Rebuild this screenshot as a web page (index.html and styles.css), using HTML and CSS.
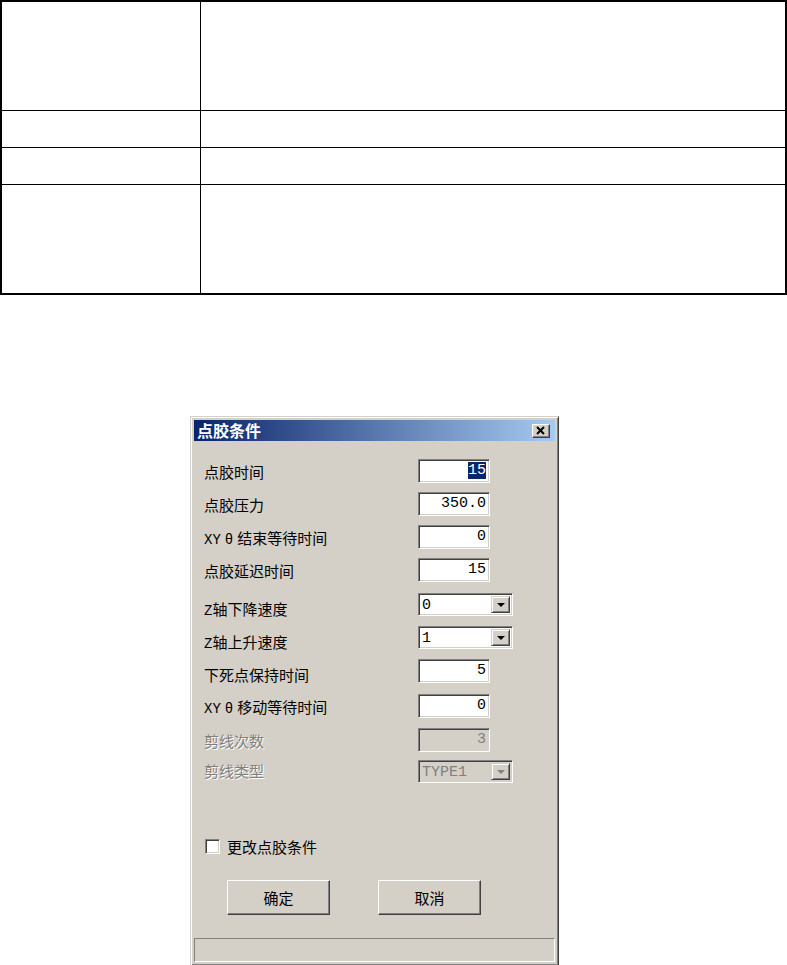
FILE: index.html
```html
<!DOCTYPE html>
<html lang="zh-CN">

<head>
    <meta charset="utf-8">
    <meta name="viewport" content="width=device-width, initial-scale=1.0">
    <title>点胶条件</title>
    <link rel="stylesheet" href="styles.css">
</head>

<body>
    <div class="doc_table">
        <div class="cell"></div>
        <div class="cell"></div>
        <div class="cell"></div>
        <div class="cell"></div>
        <div class="cell"></div>
        <div class="cell"></div>
        <div class="cell"></div>
        <div class="cell"></div>
    </div>

    <div class="dialog">
        <div class="titlebar">
            <span class="title">点胶条件</span>
            <button class="close_btn">
                <svg width="10" height="9" viewBox="0 0 10 9">
                    <path d="M1 1 L8 8 M8 1 L1 8" stroke="#000" stroke-width="2" fill="none"/>
                </svg>
            </button>
        </div>

        <div class="dialog_body">
            <div class="form">
                <div class="row">
                    <span class="label">点胶时间</span>
                    <div class="edit"><span class="valgt">15</span></div>
                </div>
                <div class="row">
                    <span class="label">点胶压力</span>
                    <div class="edit">350.0</div>
                </div>
                <div class="row">
                    <span class="label"><span class="latin">XY<span class="theta">θ</span></span>结束等待时间</span>
                    <div class="edit">0</div>
                </div>
                <div class="row tall">
                    <span class="label">点胶延迟时间</span>
                    <div class="edit">15</div>
                </div>
                <div class="row">
                    <span class="label low"><span class="latin">Z</span>轴下降速度</span>
                    <div class="combo">
                        <span class="combo_val">0</span>
                        <span class="combo_btn"><span class="arrow"></span></span>
                    </div>
                </div>
                <div class="row">
                    <span class="label low"><span class="latin">Z</span>轴上升速度</span>
                    <div class="combo">
                        <span class="combo_val">1</span>
                        <span class="combo_btn"><span class="arrow"></span></span>
                    </div>
                </div>
                <div class="row tall">
                    <span class="label low">下死点保持时间</span>
                    <div class="edit">5</div>
                </div>
                <div class="row mid">
                    <span class="label"><span class="latin">XY<span class="theta">θ</span></span>移动等待时间</span>
                    <div class="edit">0</div>
                </div>
                <div class="row short">
                    <span class="label disabled">剪线次数</span>
                    <div class="edit disabled">3</div>
                </div>
                <div class="row last">
                    <span class="label disabled high">剪线类型</span>
                    <div class="combo disabled">
                        <span class="combo_val">TYPE1</span>
                        <span class="combo_btn"><span class="arrow"></span></span>
                    </div>
                </div>
            </div>

            <div class="check_row">
                <span class="checkbox"></span>
                <span>更改点胶条件</span>
            </div>

            <div class="buttons">
                <button class="btn">确定</button>
                <button class="btn">取消</button>
            </div>

            <div class="statusbar"></div>
        </div>
    </div>
</body>

</html>
```

FILE: styles.css
```css
body {
    margin: 0;
    background-color: #fff;
    font-family: "Noto Sans CJK SC", sans-serif;
}

/* table at the top of the page */
.doc_table {
    display: grid;
    grid-template-columns: 198px 1fr;
    grid-template-rows: 108px 36px 36px 108px;
    gap: 1px;
    width: 787px;
    box-sizing: border-box;
    border: 2px solid #000;
    background-color: #000;
}

.cell {
    background-color: #fff;
}

/* the dialog */
.dialog {
    width: 369px;
    margin: 121px 0 0 190px;
    box-sizing: border-box;
    background-color: #d4d0c8;
    border: 1px solid;
    border-color: #d4d0c8 #404040 #404040 #d4d0c8;
    box-shadow: inset 1px 1px #fff, inset -1px -1px #808080;
    padding: 3px;
}

.titlebar {
    display: flex;
    align-items: center;
    justify-content: space-between;
    height: 21px;
    padding: 0 5px 0 3px;
    background: linear-gradient(to right, #0a246a, #a6caf0);
}

.title {
    color: #fff;
    font-size: 16px;
    font-weight: bold;
    line-height: 21px;
}

.close_btn {
    display: flex;
    align-items: center;
    justify-content: center;
    width: 18px;
    height: 14px;
    padding: 0;
    background-color: #d4d0c8;
    border: 1px solid;
    border-color: #fff #404040 #404040 #fff;
    box-shadow: inset -1px -1px #808080;
}

.form {
    padding: 18px 0 0 10px;
}

.row {
    display: flex;
    height: 33px;
}

.row.tall {
    height: 35px;
}

.row.mid {
    height: 34px;
}

.row.short {
    height: 32px;
}

.row.last {
    height: 23px;
}

.label {
    width: 214px;
    font-size: 15px;
    line-height: 20px;
    padding-top: 3px;
    color: #000;
}

.label.low {
    padding-top: 6px;
}

.label.high {
    padding-top: 1px;
}

.label.disabled {
    color: #808080;
    text-shadow: 1px 1px 0 #fff;
}

.latin {
    font-family: "Liberation Mono", monospace;
    font-size: 14px;
}

.theta {
    margin: 0 4px;
}

.edit {
    width: 72px;
    height: 24px;
    box-sizing: border-box;
    border: 1px solid;
    border-color: #808080 #fff #fff #808080;
    box-shadow: inset 1px 1px #404040, inset -1px -1px #d4d0c8;
    background-color: #fff;
    padding: 1px 3px 0 0;
    text-align: right;
    font-family: "Liberation Mono", monospace;
    font-size: 15px;
    line-height: 20px;
}

.edit.disabled {
    background-color: #d4d0c8;
    color: #808080;
}

.valgt {
    background-color: #0a246a;
    color: #fff;
}

.combo {
    display: flex;
    width: 95px;
    height: 23px;
    box-sizing: border-box;
    border: 1px solid;
    border-color: #808080 #fff #fff #808080;
    box-shadow: inset 1px 1px #404040, inset -1px -1px #d4d0c8;
    background-color: #fff;
    padding: 2px;
}

.combo.disabled {
    background-color: #d4d0c8;
    color: #808080;
}

.combo_val {
    flex: 1;
    padding-left: 1px;
    font-family: "Liberation Mono", monospace;
    font-size: 15px;
    line-height: 19px;
}

.combo_btn {
    display: flex;
    align-items: center;
    justify-content: center;
    width: 19px;
    box-sizing: border-box;
    background-color: #d4d0c8;
    border: 1px solid;
    border-color: #d4d0c8 #404040 #404040 #d4d0c8;
    box-shadow: inset 1px 1px #fff, inset -1px -1px #808080;
}

.arrow {
    width: 0;
    height: 0;
    border-left: 4px solid transparent;
    border-right: 4px solid transparent;
    border-top: 4px solid #000;
}

.combo.disabled .arrow {
    border-top-color: #808080;
}

.check_row {
    display: flex;
    align-items: center;
    gap: 7px;
    height: 20px;
    margin-top: 53px;
    padding-left: 11px;
    font-size: 15px;
}

.checkbox {
    width: 15px;
    height: 15px;
    box-sizing: border-box;
    border: 1px solid;
    border-color: #808080 #fff #fff #808080;
    box-shadow: inset 1px 1px #404040, inset -1px -1px #d4d0c8;
    background-color: #fff;
}

.buttons {
    display: flex;
    gap: 48px;
    margin-top: 24px;
    padding-left: 33px;
}

.btn {
    width: 103px;
    height: 35px;
    padding: 0;
    background-color: #d4d0c8;
    border: 1px solid;
    border-color: #fff #404040 #404040 #fff;
    box-shadow: inset -1px -1px #808080;
    font-family: "Noto Sans CJK SC", sans-serif;
    font-size: 15px;
    color: #000;
}

.statusbar {
    height: 24px;
    margin-top: 23px;
    box-sizing: border-box;
    border: 1px solid;
    border-color: #808080 #fff #fff #808080;
}
```
